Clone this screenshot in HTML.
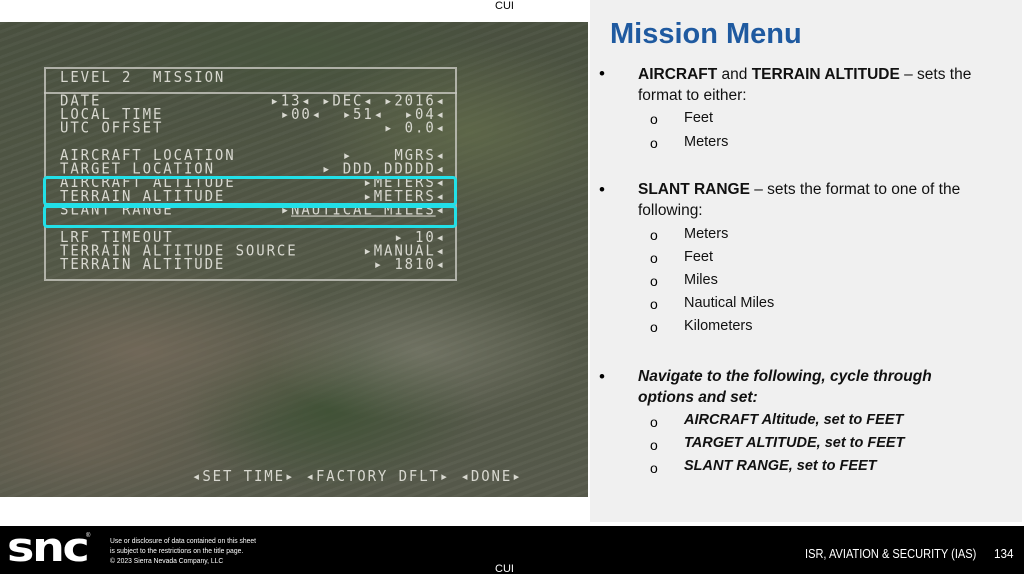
<!DOCTYPE html>
<html><head><style>
*{margin:0;padding:0;box-sizing:border-box}
body{width:1024px;height:574px;background:#fff;position:relative;overflow:hidden;font-family:"Liberation Sans",sans-serif}
.img{position:absolute;left:0;top:22px;width:588px;height:475px;
background:
radial-gradient(ellipse 160px 90px at 470px 110px,rgba(100,110,75,.7),transparent),
radial-gradient(ellipse 220px 90px at 140px 330px,rgba(125,110,95,.7),transparent),
radial-gradient(ellipse 160px 70px at 420px 330px,rgba(140,140,125,.5),transparent),
radial-gradient(ellipse 150px 80px at 330px 390px,rgba(60,80,50,.8),transparent),
radial-gradient(ellipse 200px 80px at 80px 420px,rgba(120,105,90,.6),transparent),
radial-gradient(ellipse 200px 60px at 300px 30px,rgba(70,85,60,.7),transparent),
repeating-linear-gradient(160deg,rgba(255,255,255,.035) 0 3px,transparent 3px 8px),
linear-gradient(180deg,#49503f,#525746 50%,#55584a);}
.osd{position:absolute;font-family:"DejaVu Sans Mono","Liberation Mono",monospace;color:#d8d8d0;font-size:14px;letter-spacing:1.9px;line-height:13px;white-space:pre;transform:scaleY(1.05)}
.box{position:absolute;border:2px solid #c8c8c0;opacity:.8}
.cy{position:absolute;border:3px solid #22e0e8;border-radius:4px}
.panel{position:absolute;left:590px;top:0;width:432px;height:522px;background:#f0f0f0}
h1{position:absolute;left:610px;top:18px;font-size:29px;color:#1f5aa0;font-weight:bold}
.t{position:absolute;font-size:15.5px;color:#111;line-height:21px}
.b{position:absolute;left:599px;font-size:17px}
.o{position:absolute;left:650px;font-size:14px}
.foot{position:absolute;left:0;top:526px;width:1024px;height:48px;background:#000;color:#fff}
</style></head><body>
<div style="position:absolute;left:495px;top:0;font-size:11px">CUI</div>
<div class="img"></div>
<div class="box" style="left:44px;top:67px;width:413px;height:214px"></div>
<div class="box" style="left:44px;top:92px;width:413px;height:0;border-width:1px"></div>
<div class="osd" style="left:60px;top:72px">LEVEL 2  MISSION</div>
<div class="osd" style="left:60px;top:99px">DATE
LOCAL TIME
UTC OFFSET

AIRCRAFT LOCATION
TARGET LOCATION
AIRCRAFT ALTITUDE
TERRAIN ALTITUDE
SLANT RANGE

LRF TIMEOUT
TERRAIN ALTITUDE SOURCE
TERRAIN ALTITUDE</div>
<div class="osd" style="left:246px;top:99px;text-align:right;width:200px">▸13◂ ▸DEC◂ ▸2016◂
▸00◂  ▸51◂  ▸04◂
▸ 0.0◂

▸    MGRS◂
▸ DDD.DDDDD◂
▸METERS◂
▸METERS◂
▸<u>NAUTICAL MILES</u>◂

▸ 10◂
▸MANUAL◂
▸ 1810◂</div>
<div class="cy" style="left:43px;top:176px;width:414px;height:30px"></div>
<div class="cy" style="left:43px;top:205px;width:414px;height:23px"></div>
<div class="osd" style="left:192px;top:471px">◂SET TIME▸ ◂FACTORY DFLT▸ ◂DONE▸</div>
<div class="panel"></div>
<h1>Mission Menu</h1>
<div class="b" style="top:64px">•</div>
<div class="t" style="left:638px;top:64px;width:375px"><b>AIRCRAFT</b> and <b>TERRAIN ALTITUDE</b> – sets the format to either:</div>
<div class="o" style="top:111px">o</div><div class="t" style="left:684px;top:108px;font-size:14.5px">Feet</div>
<div class="o" style="top:135px">o</div><div class="t" style="left:684px;top:132px;font-size:14.5px">Meters</div>
<div class="b" style="top:180px">•</div>
<div class="t" style="left:638px;top:179px;width:375px"><b>SLANT RANGE</b> – sets the format to one of the following:</div>
<div class="o" style="top:227px">o</div><div class="t" style="left:684px;top:224px;font-size:14.5px">Meters</div>
<div class="o" style="top:250px">o</div><div class="t" style="left:684px;top:247px;font-size:14.5px">Feet</div>
<div class="o" style="top:273px">o</div><div class="t" style="left:684px;top:270px;font-size:14.5px">Miles</div>
<div class="o" style="top:296px">o</div><div class="t" style="left:684px;top:293px;font-size:14.5px">Nautical Miles</div>
<div class="o" style="top:319px">o</div><div class="t" style="left:684px;top:316px;font-size:14.5px">Kilometers</div>
<div class="b" style="top:367px">•</div>
<div class="t" style="left:638px;top:366px;width:340px;font-weight:bold;font-style:italic">Navigate to the following, cycle through options and set:</div>
<div class="o" style="top:414px">o</div><div class="t" style="left:684px;top:410px;font-size:14.5px;font-weight:bold;font-style:italic">AIRCRAFT Altitude, set to FEET</div>
<div class="o" style="top:437px">o</div><div class="t" style="left:684px;top:433px;font-size:14.5px;font-weight:bold;font-style:italic">TARGET ALTITUDE, set to FEET</div>
<div class="o" style="top:460px">o</div><div class="t" style="left:684px;top:456px;font-size:14.5px;font-weight:bold;font-style:italic">SLANT RANGE, set to FEET</div>
<div class="foot">
<div style="position:absolute;left:7px;top:2px;font-size:40px;font-weight:bold;letter-spacing:-2px;transform:scaleX(1.15);transform-origin:left;line-height:40px;font-family:'DejaVu Sans',sans-serif">snc</div>
<div style="position:absolute;left:86px;top:7px;font-size:6px">®</div>
<div style="position:absolute;left:110px;top:10px;font-size:7.5px;line-height:10px;transform:scaleX(.9);transform-origin:left">Use or disclosure of data contained on this sheet<br>is subject to the restrictions on the title page.<br>© 2023 Sierra Nevada Company, LLC</div>
<div style="position:absolute;left:805px;top:20px;font-size:13px;transform:scaleX(.85);transform-origin:left">ISR, AVIATION &amp; SECURITY (IAS)</div>
<div style="position:absolute;left:994px;top:20px;font-size:13px;transform:scaleX(.9);transform-origin:left">134</div>
<div style="position:absolute;left:495px;top:37px;font-size:11px">CUI</div>
</div>
</body></html>
